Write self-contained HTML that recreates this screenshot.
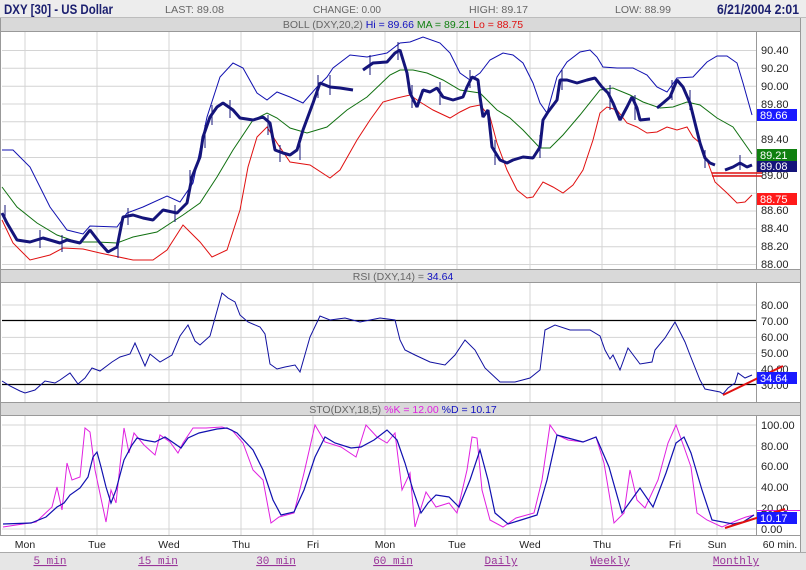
<!DOCTYPE html>
<html><head><meta charset="utf-8"><style>
html,body{margin:0;padding:0;background:#fff;}
svg{display:block;font-family:"Liberation Sans",Arial,sans-serif;}
</style></head><body>
<svg width="806" height="570" viewBox="0 0 806 570" xmlns="http://www.w3.org/2000/svg">
<rect x="0" y="0" width="806" height="570" fill="#fff"/>
<!-- header -->
<rect x="0" y="0" width="806" height="18" fill="#ededed"/>
<line x1="0" y1="17.5" x2="806" y2="17.5" stroke="#bdbdbd"/>
<text x="4" y="14" font-weight="bold" font-size="14" fill="#1c2070" textLength="109" lengthAdjust="spacingAndGlyphs">DXY [30] - US Dollar</text>
<text x="165" y="13" font-size="10.5" fill="#666" textLength="59" lengthAdjust="spacingAndGlyphs">LAST: 89.08</text>
<text x="313" y="13" font-size="10.5" fill="#666" textLength="68" lengthAdjust="spacingAndGlyphs">CHANGE: 0.00</text>
<text x="469" y="13" font-size="10.5" fill="#666" textLength="59" lengthAdjust="spacingAndGlyphs">HIGH: 89.17</text>
<text x="615" y="13" font-size="10.5" fill="#666" textLength="56" lengthAdjust="spacingAndGlyphs">LOW: 88.99</text>
<text x="717" y="14" font-weight="bold" font-size="14" fill="#1c2070" textLength="82" lengthAdjust="spacingAndGlyphs">6/21/2004 2:01</text>
<!-- label bars -->
<rect x="0" y="18" width="806" height="14" fill="#d9d9d9"/>
<line x1="0" y1="31.5" x2="806" y2="31.5" stroke="#999"/>
<text x="403" y="28" text-anchor="middle" font-size="10.5"><tspan fill="#666">BOLL (DXY,20,2) </tspan><tspan fill="#1010c0">Hi = 89.66 </tspan><tspan fill="#108010">MA = 89.21 </tspan><tspan fill="#e01010">Lo = 88.75</tspan></text>
<rect x="0" y="270" width="806" height="13" fill="#d9d9d9"/>
<line x1="0" y1="269.5" x2="806" y2="269.5" stroke="#999"/><line x1="0" y1="282.5" x2="806" y2="282.5" stroke="#999"/>
<text x="403" y="280" text-anchor="middle" font-size="10.5"><tspan fill="#666">RSI (DXY,14) = </tspan><tspan fill="#1010c0">34.64</tspan></text>
<rect x="0" y="403" width="806" height="13" fill="#d9d9d9"/>
<line x1="0" y1="402.5" x2="806" y2="402.5" stroke="#999"/><line x1="0" y1="415.5" x2="806" y2="415.5" stroke="#999"/>
<text x="403" y="413" text-anchor="middle" font-size="10.5"><tspan fill="#666">STO(DXY,18,5) </tspan><tspan fill="#e020e0">%K = 12.00 </tspan><tspan fill="#1010c0">%D = 10.17</tspan></text>
<!-- bottom -->
<rect x="0" y="535" width="806" height="17" fill="#fff"/>
<line x1="0" y1="535.5" x2="806" y2="535.5" stroke="#999"/>
<rect x="0" y="552" width="806" height="18" fill="#e6e6e6"/>
<line x1="0" y1="552.5" x2="806" y2="552.5" stroke="#aaa"/>
<g font-size="10.5" fill="#222" text-anchor="middle">
<text x="25" y="548">Mon</text><text x="97" y="548">Tue</text><text x="169" y="548">Wed</text><text x="241" y="548">Thu</text><text x="313" y="548">Fri</text><text x="385" y="548">Mon</text><text x="457" y="548">Tue</text><text x="530" y="548">Wed</text><text x="602" y="548">Thu</text><text x="675" y="548">Fri</text><text x="717" y="548">Sun</text><text x="780" y="548">60 min.</text>
</g>
<g font-family="Liberation Mono,monospace" font-size="11" fill="#993399" text-anchor="middle" text-decoration="underline">
<text x="50" y="564">5 min</text><text x="158" y="564">15 min</text><text x="276" y="564">30 min</text><text x="393" y="564">60 min</text><text x="501" y="564">Daily</text><text x="610" y="564">Weekly</text><text x="736" y="564">Monthly</text>
</g>
<!-- grids -->
<g stroke="#d4d4d4" stroke-width="1">
<path d="M25 32V269M97 32V269M169 32V269M241 32V269M313 32V269M385 32V269M457 32V269M530 32V269M602 32V269M675 32V269M717 32V269"/>
<path d="M25 283V402M97 283V402M169 283V402M241 283V402M313 283V402M385 283V402M457 283V402M530 283V402M602 283V402M675 283V402M717 283V402"/>
<path d="M25 416V535M97 416V535M169 416V535M241 416V535M313 416V535M385 416V535M457 416V535M530 416V535M602 416V535M675 416V535M717 416V535"/>
<path d="M2 50.5H756M2 68.3H756M2 86.2H756M2 104H756M2 121.8H756M2 139.7H756M2 157.5H756M2 175.3H756M2 193.2H756M2 211H756M2 228.8H756M2 246.7H756M2 264.5H756"/>
<path d="M2 305H756M2 337.4H756M2 353.6H756M2 369.8H756"/>
<path d="M2 425H756M2 445.8H756M2 466.6H756M2 487.4H756M2 508.2H756M2 529H756"/>
</g>
<g stroke="#999"><path d="M0.5 18V535M756.5 32V269M756.5 283V402M756.5 416V535M800.5 18V552"/></g>
<rect x="801" y="18" width="5" height="534" fill="#e6e6e6"/>
<!-- RSI levels -->
<path d="M2 320.5H756M2 384.5H756" stroke="#000" stroke-width="1.3"/>
<!-- axis labels -->
<g font-size="11" fill="#222">
<text x="761" y="54">90.40</text><text x="761" y="72">90.20</text><text x="761" y="90">90.00</text><text x="761" y="108">89.80</text><text x="761" y="143">89.40</text><text x="761" y="179">89.00</text><text x="761" y="214">88.60</text><text x="761" y="232">88.40</text><text x="761" y="250">88.20</text><text x="761" y="268">88.00</text>
<text x="761" y="309">80.00</text><text x="761" y="325">70.00</text><text x="761" y="341">60.00</text><text x="761" y="357">50.00</text><text x="761" y="373">40.00</text><text x="761" y="389">30.00</text>
<text x="761" y="429">100.00</text><text x="761" y="450">80.00</text><text x="761" y="470">60.00</text><text x="761" y="491">40.00</text><text x="761" y="512">20.00</text><text x="761" y="533">0.00</text>
</g>
<!-- BB -->
<polyline fill="none" stroke="#1010b0" stroke-width="1" points="2,150 13,150 30,167 50,207 67,230 83,234 90,226 117,227 127,213 143,207 167,196 180,202 193,183 207,117 220,77 233,63 243,68 257,93 267,100 277,92 290,97 303,103 317,87 327,77 333,68 350,55 367,57 387,53 400,43 410,42 423,37 440,43 450,53 460,73 470,80 480,73 490,60 503,53 513,55 523,63 533,83 540,103 547,113 557,77 567,62 580,52 590,50 597,57 603,67 617,68 633,68 647,75 657,87 667,92 677,78 693,77 707,62 717,56 727,56 737,63 743,83 752,115"/>
<polyline fill="none" stroke="#107010" stroke-width="1" points="2,187 17,207 37,223 57,235 77,242 97,242 117,243 133,237 157,232 183,215 200,203 217,177 233,150 253,120 267,113 277,118 290,128 307,133 327,127 347,110 367,97 390,75 400,70 413,70 427,73 443,80 460,90 480,93 497,110 510,118 523,130 540,148 550,148 563,135 580,115 600,90 613,88 630,95 643,102 660,108 673,107 687,102 700,105 717,118 733,127 752,154"/>
<polyline fill="none" stroke="#e01010" stroke-width="1" points="2,220 13,243 30,260 50,255 63,248 83,249 100,253 133,260 153,260 167,250 183,225 200,242 212,257 227,250 240,210 248,167 257,137 267,127 277,143 290,162 310,165 330,178 340,170 357,140 370,120 383,102 397,98 410,95 420,102 433,110 450,118 460,112 470,107 480,105 490,117 497,143 507,170 517,190 527,198 533,197 543,182 553,187 563,193 573,185 583,170 593,140 600,113 607,107 617,110 627,123 637,127 647,133 657,132 667,127 677,130 687,127 693,137 700,143 707,160 715,182 727,193 737,203 745,202 752,195"/>
<!-- price -->
<polyline fill="none" stroke="#14147a" stroke-width="3" stroke-linejoin="bevel" points="2,213 7,223 17,240 30,242 43,238 60,243 67,240 80,243 90,230 100,243 108,252 117,247 123,217 133,215 143,218 153,220 163,210 177,213 187,203 192,177 200,157 203,137 210,117 217,107 223,103 233,110 240,118 253,120 263,117 270,123 275,150 283,153 290,155 297,150 303,130 313,103 320,83 330,87 340,88 353,90"/>
<polyline fill="none" stroke="#14147a" stroke-width="3" stroke-linejoin="bevel" points="363,70 373,63 387,62 395,53 400,50 407,73 410,93 417,107 423,90 430,92 437,88 443,97 453,100 463,97 467,87 472,77 478,80 480,97 483,117 488,110 492,147 500,160 507,163 513,160 523,157 533,158 540,147 543,120 548,112 557,100 560,80 567,80 577,83 587,80 595,78 602,87 608,93 613,103 620,120 627,107 632,97 637,108 640,120 650,119"/>
<polyline fill="none" stroke="#14147a" stroke-width="3" stroke-linejoin="bevel" points="657,108 663,103 670,97 677,80 683,87 690,103 695,123 700,143 705,158 710,163 715,165"/>
<polyline fill="none" stroke="#14147a" stroke-width="3" stroke-linejoin="bevel" points="725,170 733,167 740,163 747,167 752,165"/>
<g stroke="#14147a" stroke-width="1"><path d="M5 205V222M40 230V248M62 235V252M118 240V258M128 208V225M175 205V222M190 170V190M205 125V148M212 105V125M230 100V118M268 115V135M280 145V162M300 140V160M318 75V98M330 75V95M370 55V75M398 42V60M412 85V108M440 82V105M470 70V88M495 140V165M540 135V158M562 70V90M610 85V110M635 95V120M672 80V100M690 90V110M705 150V168M740 155V170"/></g>
<!-- red support lines -->
<path d="M712 173H762M712 176H762" stroke="#e01010" stroke-width="1.6"/>
<!-- axis boxes main -->
<rect x="757" y="109" width="40" height="12" fill="#1a1aff"/><text x="760" y="119" font-size="11" fill="#fff">89.66</text>
<rect x="757" y="149" width="40" height="12" fill="#108010"/><text x="760" y="159" font-size="11" fill="#fff">89.21</text>
<rect x="757" y="161" width="40" height="11" fill="#14147a"/><text x="760" y="170" font-size="11" fill="#fff">89.08</text>
<rect x="757" y="193" width="40" height="12" fill="#ff1a1a"/><text x="760" y="203" font-size="11" fill="#fff">88.75</text>
<!-- RSI -->
<polyline fill="none" stroke="#1010a0" stroke-width="1" points="2,381 10,386 20,391 25,393 35,390 45,381 55,383 60,380 70,373 78,384 85,378 92,368 100,371 112,362 120,357 130,354 135,343 145,366 150,354 160,362 172,355 180,336 188,325 195,341 200,345 210,336 222,293 228,298 235,302 240,315 248,322 260,327 265,334 270,364 277,369 285,367 295,365 300,372 310,337 320,316 330,320 345,318 360,322 370,320 380,318 395,320 400,340 405,350 415,355 430,362 445,365 455,355 465,340 475,350 485,368 500,382 515,382 530,378 540,370 545,330 555,325 570,330 590,330 600,336 605,350 610,359 613,355 620,370 628,348 640,364 652,362 655,350 665,338 670,330 675,322 680,332 685,342 690,355 700,380 705,389 720,392 723,394 728,388 735,383 738,373 745,378 752,375"/>
<path d="M723 395L783 366" stroke="#e01010" stroke-width="2"/>
<rect x="757" y="372" width="40" height="12" fill="#1a1aff"/><text x="760" y="382" font-size="11" fill="#fff">34.64</text>
<!-- STO -->
<polyline fill="none" stroke="#e020e0" stroke-width="1" points="3,527 36,522 52,507 57,487 62,510 67,463 72,480 80,477 85,428 90,432 95,470 106,522 111,490 116,503 124,428 129,453 134,433 144,445 155,455 160,435 170,442 178,453 183,443 193,428 206,428 222,427 232,430 243,443 253,470 263,480 271,523 279,517 294,513 304,473 315,425 325,442 341,447 356,457 366,425 377,437 387,443 395,433 402,490 410,473 415,527 426,492 436,507 449,503 457,513 467,470 472,437 477,438 482,490 490,520 503,527 516,518 534,513 542,480 550,425 557,435 568,440 583,442 596,437 604,463 614,523 624,513 630,470 637,500 645,508 658,480 668,443 676,425 684,447 691,467 697,513 707,520 722,527 738,520 746,517 754,515"/>
<polyline fill="none" stroke="#1010b0" stroke-width="1.2" points="3,524 31,523 46,517 57,507 64,503 70,495 80,488 88,477 93,457 97,452 101,467 106,487 111,503 116,490 124,460 132,445 137,438 144,440 155,442 165,437 181,448 188,438 199,433 217,429 227,428 237,433 253,450 263,470 273,500 281,515 294,512 304,490 315,457 325,437 335,443 351,448 361,447 374,440 387,430 397,440 405,463 413,490 421,513 428,503 436,495 449,497 459,507 470,480 480,450 488,480 495,513 508,524 521,520 537,515 547,480 557,435 568,438 583,442 596,437 609,467 622,513 640,488 653,507 666,473 676,443 684,437 691,453 702,490 712,520 733,524 743,522 754,515"/>
<path d="M757 510.5H800" stroke="#e020e0" stroke-width="1"/>
<path d="M725 528L785 509" stroke="#e01010" stroke-width="2"/>
<rect x="757" y="512" width="40" height="12" fill="#1a1aff"/><text x="760" y="522" font-size="11" fill="#fff">10.17</text>
</svg>
</body></html>
